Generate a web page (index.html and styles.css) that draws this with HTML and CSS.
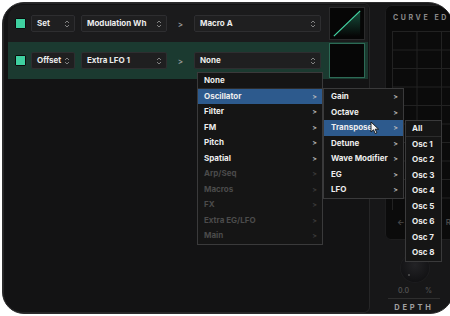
FILE: index.html
```html
<!DOCTYPE html>
<html lang="en">
<head>
  <meta charset="UTF-8">
  <title>Modulation Matrix</title>
  <link rel="stylesheet" href="styles.css">
</head>
<body>
  <div class="screen">
    <div class="window">
      <section class="matrix">
        <div class="row">
          <span class="check"></span>
          <div class="select sel-mode">Set
            <svg class="updown" viewBox="0 0 6 10"><path d="M1 4 L3 2 L5 4 M1 6 L3 8 L5 6"/></svg>
          </div>
          <div class="select sel-source">Modulation Wh
            <svg class="updown" viewBox="0 0 6 10"><path d="M1 4 L3 2 L5 4 M1 6 L3 8 L5 6"/></svg>
          </div>
          <span class="arrow">&gt;</span>
          <div class="select sel-dest">Macro A
            <svg class="updown" viewBox="0 0 6 10"><path d="M1 4 L3 2 L5 4 M1 6 L3 8 L5 6"/></svg>
          </div>
          <div class="thumb">
            <svg viewBox="0 0 34 33">
              <defs>
                <linearGradient id="fillGreen" x1="0" y1="0" x2="0" y2="1">
                  <stop offset="0" stop-color="#2aa57c" stop-opacity="0.45"/>
                  <stop offset="1" stop-color="#2aa57c" stop-opacity="0"/>
                </linearGradient>
              </defs>
              <path d="M3 30 L31 3 L31 30 Z" fill="url(#fillGreen)"/>
              <path d="M3 30 L31 3" stroke="#45d6a5" stroke-width="1.3" fill="none"/>
            </svg>
          </div>
        </div>

        <div class="row active">
          <span class="check"></span>
          <div class="select sel-mode">Offset
            <svg class="updown" viewBox="0 0 6 10"><path d="M1 4 L3 2 L5 4 M1 6 L3 8 L5 6"/></svg>
          </div>
          <div class="select sel-source">Extra LFO 1
            <svg class="updown" viewBox="0 0 6 10"><path d="M1 4 L3 2 L5 4 M1 6 L3 8 L5 6"/></svg>
          </div>
          <span class="arrow">&gt;</span>
          <div class="select sel-dest">None
            <svg class="updown" viewBox="0 0 6 10"><path d="M1 4 L3 2 L5 4 M1 6 L3 8 L5 6"/></svg>
          </div>
          <div class="thumb thumb-active"></div>
        </div>
      </section>

      <aside class="side">
        <div class="curve-editor">
          <div class="ce-title">CURVE ED</div>
          <div class="ce-grid"></div>
          <div class="ce-foot"><span>&larr;</span><span>R</span></div>
        </div>
        <div class="knob"><span class="knob-dot"></span></div>
        <div class="knob-values"><span>0.0</span><span>%</span></div>
        <div class="knob-label">DEPTH</div>
      </aside>
    </div>

    <ul class="menu menu-main">
      <li class="first">None</li>
      <li class="hover">Oscillator<b>&gt;</b></li>
      <li>Filter<b>&gt;</b></li>
      <li>FM<b>&gt;</b></li>
      <li>Pitch<b>&gt;</b></li>
      <li>Spatial<b>&gt;</b></li>
      <li class="off">Arp/Seq<b>&gt;</b></li>
      <li class="off">Macros<b>&gt;</b></li>
      <li class="off">FX<b>&gt;</b></li>
      <li class="off">Extra EG/LFO<b>&gt;</b></li>
      <li class="off">Main<b>&gt;</b></li>
    </ul>

    <ul class="menu menu-osc">
      <li>Gain<b>&gt;</b></li>
      <li>Octave<b>&gt;</b></li>
      <li class="hover">Transpose<b>&gt;</b></li>
      <li>Detune<b>&gt;</b></li>
      <li>Wave Modifier<b>&gt;</b></li>
      <li>EG<b>&gt;</b></li>
      <li>LFO<b>&gt;</b></li>
    </ul>

    <ul class="menu menu-target">
      <li class="first">All</li>
      <li>Osc 1</li>
      <li>Osc 2</li>
      <li>Osc 3</li>
      <li>Osc 4</li>
      <li>Osc 5</li>
      <li>Osc 6</li>
      <li>Osc 7</li>
      <li>Osc 8</li>
    </ul>

    <svg class="cursor" viewBox="0 0 10 14">
      <path d="M1 1 L1 11 L3.5 8.8 L5.3 12.6 L6.9 11.9 L5.2 8.2 L8.6 8.2 Z" fill="#f2f2f2" stroke="#111" stroke-width="0.9" stroke-linejoin="round"/>
    </svg>
  </div>
</body>
</html>
```

FILE: styles.css
```css
body {
  margin: 0;
  background: #ffffff;
  font-family: "Inter", "Liberation Sans", sans-serif;
}

.screen {
  position: relative;
  width: 450px;
  height: 316px;
  overflow: hidden;
  background: #ffffff;
}

.window {
  margin: 2px 0 0 2px;
  width: 452px;
  height: 312px;
  box-sizing: border-box;
  display: flex;
  background: #171718;
  border: 1px solid #2c2c2d;
  border-radius: 22px 26px 24px 22px;
  overflow: hidden;
}

/* modulation rows */
.matrix {
  width: 367px;
  flex-shrink: 0;
  box-sizing: border-box;
  background: #131314;
  border: 1px solid #262627;
  border-radius: 20px 6px 6px 20px;
  padding-top: 1px;
}

.row {
  height: 37px;
  margin: 0 1px 0 4px;
  padding-left: 7px;
  display: flex;
  align-items: center;
  background: #1b1b1c;
  border-radius: 14px 0 0 0;
}

.row.active {
  background: #1b3a30;
  border-radius: 0;
}

.check {
  width: 9px;
  height: 9px;
  background: #3fd0a0;
  border: 1.5px solid #0c0c0c;
  border-radius: 1px;
  flex-shrink: 0;
}

.select {
  position: relative;
  height: 17px;
  box-sizing: border-box;
  background: #1f1f20;
  border: 1px solid #2e2e30;
  border-radius: 2px;
  color: #ececec;
  font-size: 8px;
  font-weight: 700;
  line-height: 15px;
  padding-left: 5px;
  white-space: nowrap;
  flex-shrink: 0;
}

.sel-mode { width: 44px; margin-left: 5px; }
.sel-source { width: 86px; margin-left: 6px; }
.sel-dest { width: 127px; }

.updown {
  position: absolute;
  right: 4px;
  top: 3px;
  width: 6px;
  height: 10px;
  fill: none;
  stroke: #8c8c8c;
  stroke-width: 0.9;
}

.arrow {
  width: 27px;
  text-align: center;
  color: #9a9a9a;
  font-size: 8px;
  font-weight: 600;
}

.thumb {
  width: 36px;
  height: 33px;
  margin-left: 8px;
  box-sizing: border-box;
  background: #060606;
  border: 1px solid #2a2a2b;
}

.thumb svg {
  display: block;
  width: 34px;
  height: 31px;
}

.thumb-active {
  height: 35px;
  border-color: #2c6a55;
}

/* right column */
.side {
  flex: 1;
  padding-left: 15px;
  padding-top: 2px;
}

.curve-editor {
  height: 235px;
  box-sizing: border-box;
  background: #0b0b0b;
  border: 1px solid #1d1d1e;
  border-radius: 7px 0 0 6px;
  padding: 7px 0 0 6px;
}

.ce-title {
  color: #8a8a8a;
  font-size: 7px;
  font-weight: 700;
  letter-spacing: 2.6px;
  padding-left: 1px;
  white-space: nowrap;
}

.ce-grid {
  margin-top: 9px;
  height: 178px;
  border-top: 1px solid #222;
  border-left: 1px solid #222;
  background-image:
    linear-gradient(to right, #222 1px, transparent 1px),
    linear-gradient(to bottom, #222 1px, transparent 1px);
  background-size: 24.5px 18.5px;
  background-position: 23.5px 17.5px;
}

.ce-foot {
  display: flex;
  justify-content: space-between;
  padding: 7px 0 0 5px;
  width: 54px;
  color: #4a4a4a;
  font-size: 8px;
  font-weight: 600;
}

.knob {
  position: relative;
  width: 28px;
  height: 28px;
  margin: 14px 0 0 16px;
  border-radius: 50%;
  background: radial-gradient(circle at 50% 40%, #232326, #121214 75%);
  box-shadow: 0 0 0 1px #1d1d1f;
}

.knob-dot {
  position: absolute;
  left: 7px;
  top: 20px;
  width: 2px;
  height: 2px;
  border-radius: 50%;
  background: #555;
}

.knob-values {
  display: flex;
  justify-content: space-between;
  width: 34px;
  margin: 4px 0 0 13px;
  padding: 0 0 3px;
  color: #4f4f4f;
  font-size: 7px;
  font-weight: 600;
}

.knob-label {
  width: 52px;
  margin-left: 3px;
  border-top: 1px solid #2e2e2e;
  padding-top: 4px;
  text-align: center;
  color: #a0a0a0;
  font-size: 7.5px;
  font-weight: 700;
  letter-spacing: 2.8px;
}

/* dropdown menus */
.menu {
  position: absolute;
  margin: 0;
  padding: 0;
  list-style: none;
  background: #151515;
  border: 1px solid #3a3a3b;
  box-sizing: border-box;
}

.menu li {
  display: flex;
  justify-content: space-between;
  height: 15.5px;
  line-height: 15.5px;
  color: #ededed;
  font-size: 8px;
  font-weight: 700;
  white-space: nowrap;
}

.menu li b {
  color: #bdbdbd;
  font-weight: 600;
  font-size: 7px;
}

.menu li.first {
  box-shadow: inset 0 -1px 0 #2c2c2c;
}

.menu li.hover {
  background: #2d5a8d;
}

.menu li.off {
  color: #4b4b4b;
}

.menu li.off b {
  color: #3e3e3e;
}

.menu-main {
  left: 197px;
  top: 72px;
  width: 126px;
}

.menu-main li {
  padding: 0 5px 0 6px;
}

.menu-osc {
  left: 323px;
  top: 88px;
  width: 81px;
}

.menu-osc li {
  padding: 0 5px 0 7px;
}

.menu-target {
  left: 405px;
  top: 120px;
  width: 37px;
}

.menu-target li {
  padding-left: 6px;
}

.cursor {
  position: absolute;
  left: 370px;
  top: 121px;
  width: 10px;
  height: 14px;
}
```
